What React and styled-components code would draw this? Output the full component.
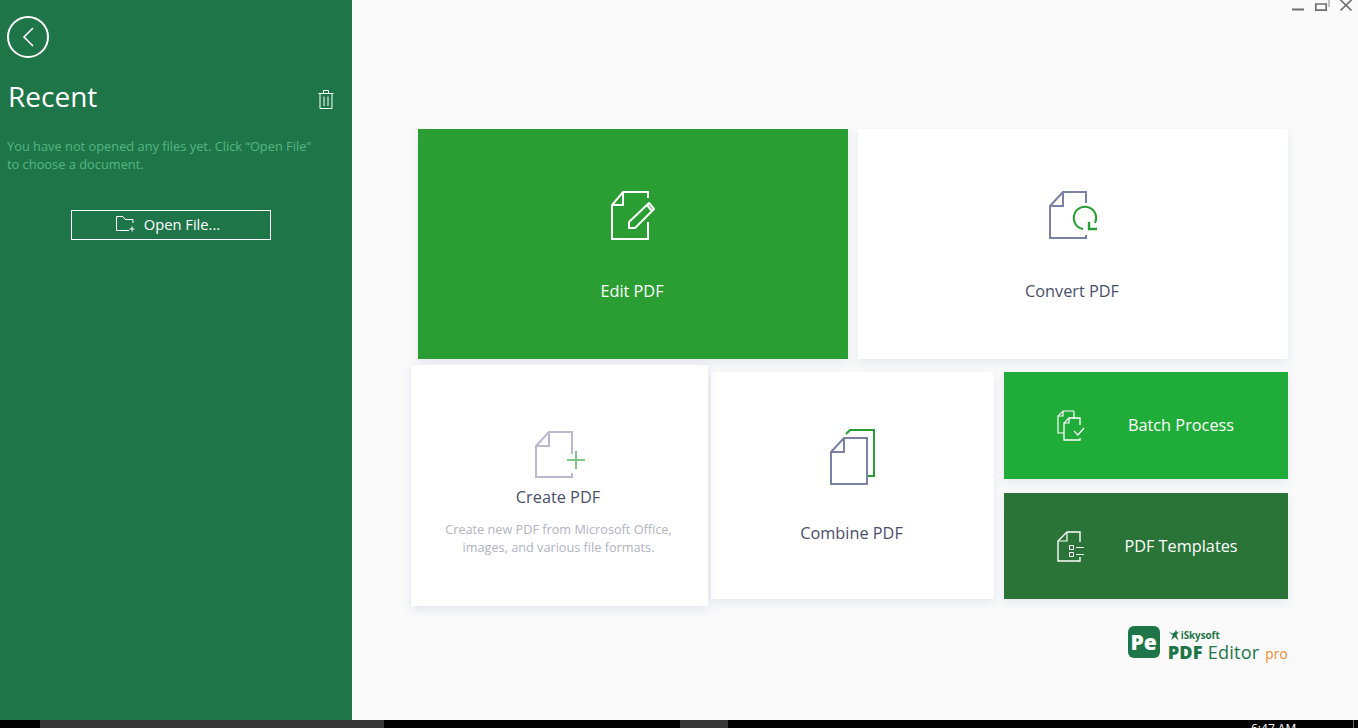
import React from "react";
import styled, { createGlobalStyle } from "styled-components";

const Global = createGlobalStyle`
  html, body { margin: 0; padding: 0; height: 100%; overflow: hidden; background: #fafafa; }
  #root { height: 100%; }
  * { box-sizing: border-box; }
`;

const Page = styled.div`
  width: 1358px;
  height: 728px;
  display: flex;
  flex-direction: column;
  font-family: "Open Sans", "Liberation Sans", sans-serif;
  overflow: hidden;
`;
const Body = styled.div`
  height: 720px;
  display: flex;
`;
const Sidebar = styled.aside`
  width: 352px;
  background: #1e7547;
  display: flex;
  flex-direction: column;
  padding: 16px 0 0 7px;
`;
const BackButton = styled.button`
  width: 42px;
  height: 42px;
  padding: 0;
  border: 2px solid #fff;
  border-radius: 50%;
  background: none;
  display: flex;
  align-items: center;
  justify-content: center;
`;
const RecentRow = styled.div`
  display: flex;
  align-items: center;
  justify-content: space-between;
  width: 327px;
  height: 38px;
  margin-top: 19px;
  padding-left: 1px;
`;
const RecentTitle = styled.h1`
  margin: 0;
  font-size: 28px;
  line-height: 38px;
  font-weight: 400;
  color: #fff;
`;
const TrashSlot = styled.div`
  padding-top: 6px;
`;
const Hint = styled.p`
  margin: 22px 0 0;
  width: 308px;
  font-size: 12.83px;
  line-height: 18px;
  color: #55b584;
`;
const OpenButton = styled.button`
  width: 200px;
  height: 30px;
  margin: 37px 0 0 64px;
  padding: 0 6px 2px 0;
  background: none;
  border: 1px solid #fff;
  color: #fff;
  font: 400 14.7px "Open Sans", sans-serif;
  display: flex;
  align-items: center;
  justify-content: center;
  gap: 8px;
`;
const Main = styled.main`
  flex: 1;
  display: flex;
  flex-direction: column;
  background: #fafafa;
`;
const TitleBar = styled.div`
  height: 129px;
  display: flex;
  justify-content: flex-end;
  align-items: flex-start;
`;
const Content = styled.div`
  margin-left: 66px;
  width: 870px;
  display: flex;
  flex-direction: column;
`;
const TopRow = styled.div`
  display: flex;
  gap: 10px;
`;
const BottomRow = styled.div`
  display: flex;
  gap: 10px;
  margin-top: 13px;
`;
const Card = styled.div`
  background: ${(p) => p.$bg || "#fff"};
  color: ${(p) => p.$fg || "#4a4f6b"};
  box-shadow: 0 4px 10px rgba(110, 120, 170, 0.13);
  font-size: 16.3px;
  display: flex;
`;
const LargeCard = styled(Card)`
  width: 430px;
  height: 230px;
  flex-direction: column;
  align-items: center;
  padding-top: 61px;
`;
const LargeLabel = styled.div`
  margin-top: 37px;
  padding-right: 2px;
  line-height: 24px;
`;
const HoverCard = styled(Card)`
  width: 297px;
  height: 241px;
  margin: -7px;
  flex-direction: column;
  align-items: center;
  padding-top: 66px;
  position: relative;
  box-shadow: 0 3px 10px rgba(110, 120, 170, 0.18);
`;
const HoverLabel = styled.div`
  line-height: 24px;
  margin-top: 6px;
  padding-right: 3px;
`;
const Description = styled.div`
  margin-top: 11px;
  padding-right: 2px;
  font-size: 12.7px;
  line-height: 18px;
  color: #b1b3bf;
  text-align: center;
`;
const CombineCard = styled(Card)`
  width: 283px;
  height: 227px;
  flex-direction: column;
  align-items: center;
  padding-top: 57px;
`;
const CombineLabel = styled.div`
  margin-top: 36px;
  padding-right: 2px;
  line-height: 24px;
`;
const SideColumn = styled.div`
  width: 284px;
  display: flex;
  flex-direction: column;
  gap: 14px;
`;
const SideCard = styled(Card)`
  height: ${(p) => p.$h}px;
  align-items: center;
  padding-left: 53px;
`;
const SideLabel = styled.span`
  width: 150px;
  margin-left: 21px;
  padding-bottom: ${(p) => p.$pb || 0}px;
  text-align: center;
`;
const LogoRow = styled.div`
  margin-top: 27px;
  display: flex;
  justify-content: flex-end;
  align-items: flex-start;
  gap: 8px;
`;
const LogoMark = styled.div`
  width: 32px;
  height: 32px;
  border-radius: 6px;
  background: #1e7547;
  color: #fff;
  font: 800 21px/32px "Open Sans", sans-serif;
  text-align: center;
`;
const LogoText = styled.div`
  display: flex;
  flex-direction: column;
  padding-top: 3px;
  color: #1e7547;
`;
const LogoBrand = styled.div`
  display: flex;
  align-items: flex-end;
  gap: 1px;
  height: 12px;
  font: 700 9.8px/11px "Open Sans", sans-serif;
`;
const LogoName = styled.div`
  display: flex;
  align-items: baseline;
  margin-top: 1px;
  font-size: 18.1px;
  line-height: 21px;
  white-space: nowrap;
  letter-spacing: 0.2px;
`;
const LogoStrong = styled.b`
  font-weight: 800;
  margin-right: 5px;
`;
const LogoPro = styled.span`
  color: #f5882a;
  font-size: 13.6px;
  font-weight: 500;
  margin-left: 6px;
`;
const Taskbar = styled.footer`
  height: 8px;
  background: #030303;
  display: flex;
  overflow: hidden;
`;
const TaskSegment = styled.div`
  height: 8px;
  flex-shrink: 0;
  width: ${(p) => p.$w}px;
  margin-left: ${(p) => p.$ml}px;
  background: ${(p) => p.$c || "#363636"};
`;
const Clock = styled.div`
  margin-left: 523px;
  width: 45px;
  flex-shrink: 0;
  color: #fff;
  font: 400 12px/12px "Open Sans", sans-serif;
  padding-top: 3px;
  white-space: nowrap;
`;
const IconSvg = styled.svg`
  display: block;
  flex-shrink: 0;
  margin-left: ${(p) => p.$ml || 0}px;
`;

const Icon = ({ w, h, ml, children }) => (
  <IconSvg width={w} height={h} viewBox={`0 0 ${w} ${h}`} fill="none" $ml={ml}>
    {children}
  </IconSvg>
);

const GREEN = "#2a9e32";
const SLATE = "#7b80a5";

export default function App() {
  return (
    <Page>
      <Global />
      <Body>
        <Sidebar>
          <BackButton aria-label="Back">
            <Icon w={14} h={22}>
              <path d="M12 2 L3 11 L12 20" stroke="#fff" strokeWidth="1.6" />
            </Icon>
          </BackButton>
          <RecentRow>
            <RecentTitle>Recent</RecentTitle>
            <TrashSlot>
              <Icon w={16} h={19}>
                <path d="M0.5 3.5H15.5M5.5 3.5V0.5H10.5V3.5M2 3.5V18.5H14V3.5M6 6.5V16M10 6.5V16" stroke="#fff" strokeWidth="1" />
              </Icon>
            </TrashSlot>
          </RecentRow>
          <Hint>
            You have not opened any files yet. Click “Open File” to choose a document.
          </Hint>
          <OpenButton>
            <Icon w={20} h={16}>
              <path d="M17 7V3.5H9L7 0.5H0.5V14.5H13" stroke="#fff" strokeWidth="1" />
              <path d="M16 10.5V15.5M13.5 13H18.5" stroke="#fff" strokeWidth="1" />
            </Icon>
            Open File...
          </OpenButton>
        </Sidebar>
        <Main>
          <TitleBar>
            <Icon w={73} h={14}>
              <path d="M7 9.5H19" stroke="#6f6f6f" strokeWidth="2" />
              <path d="M30.8 4H41.2V10.2H30.8Z" stroke="#6f6f6f" strokeWidth="1.7" />
              <path d="M44 0V7" stroke="#8a8a8a" strokeWidth="1" />
              <path d="M55.5 0L66.5 10.5M66.5 0L55.5 10.5" stroke="#6f6f6f" strokeWidth="1.7" />
            </Icon>
          </TitleBar>
          <Content>
            <TopRow>
              <LargeCard $bg={GREEN} $fg="#fff">
                <Icon w={48} h={52} ml={2}>
                  <path d="M38 8V2H13L2 15V49H38V32" stroke="#fff" strokeWidth="2" />
                  <path d="M13 2V15H2" stroke="#fff" strokeWidth="2" />
                  <path d="M19 32V38H25L44 19L39 13Z" stroke="#fff" strokeWidth="2" strokeLinejoin="round" />
                  <path d="M37 15L42 21" stroke="#fff" strokeWidth="2" />
                </Icon>
                <LargeLabel>Edit PDF</LargeLabel>
              </LargeCard>
              <LargeCard>
                <Icon w={52} h={52} ml={4}>
                  <path d="M37 13V2H14L1 16V48H37V45" stroke={SLATE} strokeWidth="2" />
                  <path d="M14 2V16H1" stroke={SLATE} strokeWidth="2" />
                  <path d="M34 39A11.2 11.2 0 1 1 46 33" stroke={GREEN} strokeWidth="2" />
                  <path d="M40 32V39H48" stroke={GREEN} strokeWidth="2.4" />
                </Icon>
                <LargeLabel>Convert PDF</LargeLabel>
              </LargeCard>
            </TopRow>
            <BottomRow>
              <HoverCard>
                <Icon w={52} h={48} ml={3}>
                  <path d="M37 23V1H14L1 15V46H37V42" stroke="#b8bace" strokeWidth="2" />
                  <path d="M14 1V15H1" stroke="#b8bace" strokeWidth="2" />
                  <path d="M41 20V38M32 29H50" stroke="#7fc787" strokeWidth="2" />
                </Icon>
                <HoverLabel>Create PDF</HoverLabel>
                <Description>
                  Create new PDF from Microsoft Office,
                  <br />
                  images, and various file formats.
                </Description>
              </HoverCard>
              <CombineCard>
                <Icon w={46} h={56} ml={1}>
                  <path d="M16 5L20 1H44V47H37" stroke={GREEN} strokeWidth="2" />
                  <path d="M14 9H37V55H1V23L14 9Z" stroke={SLATE} strokeWidth="2" />
                  <path d="M14 9V23H1" stroke={SLATE} strokeWidth="2" />
                </Icon>
                <CombineLabel>Combine PDF</CombineLabel>
              </CombineCard>
              <SideColumn>
                <SideCard $bg="#20ac38" $fg="#fff" $h={107}>
                  <Icon w={28} h={32}>
                    <path d="M17 1.5V9M7 23H1V6L6 1H17" stroke="#fff" strokeWidth="1.2" />
                    <path d="M6 1V6H1" stroke="#fff" strokeWidth="1.2" />
                    <path d="M23 15V8H12L7 13V30H23V28" stroke="#fff" strokeWidth="1.3" />
                    <path d="M12 8V13H7" stroke="#fff" strokeWidth="1.2" />
                    <path d="M17 21L21 25L27 18" stroke="#fff" strokeWidth="1.3" />
                  </Icon>
                  <SideLabel $pb={2}>Batch Process</SideLabel>
                </SideCard>
                <SideCard $bg="#2a7437" $fg="#fff" $h={106}>
                  <Icon w={28} h={32}>
                    <path d="M23 12V2H10L1 11V31H23V27" stroke="#fff" strokeWidth="1.4" />
                    <path d="M10 2V11H1" stroke="#fff" strokeWidth="1.2" />
                    <path d="M12.5 15.5H16.5V19.5H12.5ZM12.5 22.5H16.5V26.5H12.5Z" stroke="#fff" strokeWidth="1" />
                    <path d="M19 17.5H27M19 24.5H27" stroke="#fff" strokeWidth="1.2" />
                  </Icon>
                  <SideLabel>PDF Templates</SideLabel>
                </SideCard>
              </SideColumn>
            </BottomRow>
            <LogoRow>
              <LogoMark>Pe</LogoMark>
              <LogoText>
                <LogoBrand>
                  <Icon w={12} h={12}>
                    <path d="M0.5 2.5L4.5 4.5L7 3L8 0.5L9 3.5L11.5 2L8.5 6L10.5 11.5L7 8L3 11L5 6.5Z" fill="#1e7547" />
                  </Icon>
                  iSkysoft
                </LogoBrand>
                <LogoName>
                  <LogoStrong>PDF</LogoStrong>Editor
                  <LogoPro>pro</LogoPro>
                </LogoName>
              </LogoText>
            </LogoRow>
          </Content>
        </Main>
      </Body>
      <Taskbar>
        <TaskSegment $ml={40} $w={344} />
        <TaskSegment $ml={296} $w={48} />
        <Clock>6:47 AM</Clock>
        <TaskSegment $ml={57} $w={1} $c="#666" />
      </Taskbar>
    </Page>
  );
}
